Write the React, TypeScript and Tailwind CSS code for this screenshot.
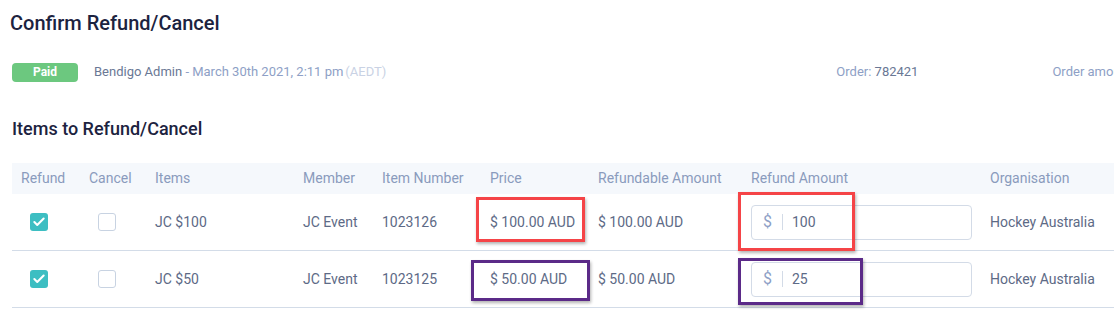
import { Check } from 'lucide-react'

const font = { fontFamily: 'Roboto, "Noto Sans", sans-serif' }

const rows = [
  { item: 'JC $100', member: 'JC Event', num: '1023126', price: '$ 100.00 AUD', refundable: '$ 100.00 AUD', amount: '100', org: 'Hockey Australia' },
  { item: 'JC $50', member: 'JC Event', num: '1023125', price: '$ 50.00 AUD', refundable: '$ 50.00 AUD', amount: '25', org: 'Hockey Australia' },
]

const cols = 'grid grid-cols-[68px_66px_148px_79px_108px_108px_153px_239px_160px]'

export default function App() {
  return (
    <div className="relative w-[1114px] h-[316px] overflow-hidden bg-white" style={font}>
      <h1 className="pl-[10px] pt-[10px] text-[20px] leading-[26px] font-medium text-[#1c2340]">
        Confirm Refund/Cancel
      </h1>

      {/* Order summary */}
      <div className="flex items-center h-[20px] mt-[26px] pl-[12px] whitespace-nowrap text-[13px]">
        <span className="w-[66px] h-[19px] rounded-[4px] bg-[#6cc87f] text-white text-[12px] font-bold flex items-center justify-center">
          Paid
        </span>
        <span className="ml-[16px] text-[#6a7895]">Bendigo Admin</span>
        <span className="text-[#8e9fc6]">&nbsp;- March 30th 2021, 2:11 pm</span>
        <span className="text-[#c9d2e4] ml-[2px]">(AEDT)</span>
        <span className="ml-auto flex">
          <span className="text-[#8e9fc6]">Order:&nbsp;</span>
          <span className="text-[#6a7895]">782421</span>
        </span>
        <span className="ml-[134px] mr-[-18px] text-[#8e9fc6]">Order amount</span>
      </div>

      <h2 className="pl-[12px] mt-[35px] text-[18px] leading-[24px] font-medium text-[#1c2340]">
        Items to Refund/Cancel
      </h2>

      {/* Table */}
      <div className="ml-[12px] mt-[22px] w-[1140px] text-[14px] whitespace-nowrap">
        <div className={`${cols} h-[31px] items-center bg-[#f5f8fc] text-[#8a9bbd]`}>
          <div className="pl-[9px]">Refund</div>
          <div className="pl-[9px]">Cancel</div>
          <div className="pl-[9px]">Items</div>
          <div className="pl-[9px]">Member</div>
          <div className="pl-[9px]">Item Number</div>
          <div className="pl-[9px]">Price</div>
          <div className="pl-[9px]">Refundable Amount</div>
          <div className="pl-[9px]">Refund Amount</div>
          <div className="pl-[9px]">Organisation</div>
        </div>
        {rows.map((r, i) => (
          <div key={i} className={`${cols} h-[57px] items-center border-b border-[#d3dce8] text-[#5d6a86]`}>
            <div className="pl-[18px]">
              <span className="w-[18px] h-[18px] rounded-[3px] bg-[#3dbec2] flex items-center justify-center">
                <Check size={14} strokeWidth={3.5} color="white" />
              </span>
            </div>
            <div className="pl-[18px]">
              <span className="block w-[18px] h-[18px] rounded-[3px] border border-[#c8d3e2] bg-white" />
            </div>
            <div className="pl-[9px]">{r.item}</div>
            <div className="pl-[9px]">{r.member}</div>
            <div className="pl-[9px]">{r.num}</div>
            <div className="pl-[9px]">{r.price}</div>
            <div className="pl-[9px]">{r.refundable}</div>
            <div className="pl-[9px]">
              <div className="w-[221px] h-[35px] rounded-[4px] border border-[#d3dbe7] flex items-center">
                <span className="w-[30px] pl-[11px] text-[16px] text-[#8e9fc6]">$</span>
                <span className="w-px h-[16px] bg-[#d3dbe7]" />
                <span className="pl-[9px] text-[#5d6a86]">{r.amount}</span>
              </div>
            </div>
            <div className="pl-[9px]">{r.org}</div>
          </div>
        ))}
      </div>

      {/* Annotation boxes */}
      <div className="absolute left-[476px] top-[197px] w-[109px] h-[45px] border-[3px] border-[#f54447] shadow-[1px_2px_3px_rgba(0,0,0,0.3)]" />
      <div className="absolute left-[738px] top-[192px] w-[117px] h-[59px] border-[3px] border-[#f54447] shadow-[1px_2px_3px_rgba(0,0,0,0.3)]" />
      <div className="absolute left-[471px] top-[260px] w-[119px] h-[41px] border-[3px] border-[#5b2a88] shadow-[1px_2px_3px_rgba(0,0,0,0.3)]" />
      <div className="absolute left-[738px] top-[258px] w-[125px] h-[47px] border-[3px] border-[#5b2a88] shadow-[1px_2px_3px_rgba(0,0,0,0.3)]" />
    </div>
  )
}
